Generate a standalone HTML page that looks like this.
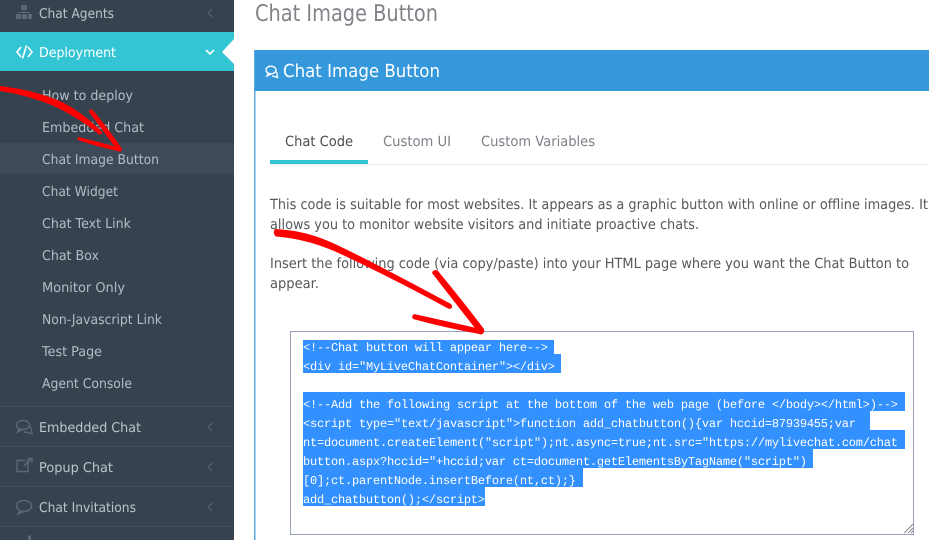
<!DOCTYPE html>
<html><head><meta charset="utf-8"><style>
html,body{margin:0;padding:0;background:#fff;width:929px;height:540px;overflow:hidden}
svg{display:block}
text{font-family:"DejaVu Sans",sans-serif;white-space:pre}
.s{font-size:13.5px;fill:#b4bcc7}
.m{font-size:13.5px;fill:#bcc3cd}
.b{font-size:14px;fill:#55585c}
.c{font-family:"Liberation Mono",monospace;font-size:12px;fill:#fff}
</style></head><body>
<svg width="929" height="540" viewBox="0 0 929 540" xmlns="http://www.w3.org/2000/svg" text-rendering="geometricPrecision">
<rect width="929" height="540" fill="#fff"/>
<!-- sidebar -->
<rect width="234" height="540" fill="#37424f"/>
<rect y="32" width="234" height="39" fill="#33c5d4"/>
<path d="M234 39L222 52L234 64Z" fill="#fff"/>
<rect y="143" width="234" height="31" fill="#3e4a59"/>
<g fill="#414d5b"><rect y="406" width="234" height="1"/><rect y="446" width="234" height="1"/><rect y="486" width="234" height="1"/><rect y="526" width="234" height="1"/></g>
<!-- sidebar icons -->
<g fill="#5d6875"><rect x="21" y="5" width="6" height="5"/><rect x="23.5" y="10" width="1" height="3"/><rect x="18" y="12" width="12" height="1"/><rect x="16" y="14" width="5" height="5"/><rect x="22" y="14" width="5" height="5"/><rect x="28" y="14" width="4" height="5"/></g>
<path d="M21 47L17 52L21 57M28 47L32 52L28 57M26.5 45.5L22.5 58.5" fill="none" stroke="#fff" stroke-width="1.6"/>
<g fill="none" stroke="#5d6875" stroke-width="1.4">
<ellipse cx="23" cy="425" rx="6.5" ry="4.5"/><path d="M19 429L17.5 432L22 430"/><path d="M29 426.5Q32 428 31.5 431L32 434L28 432.5L24 432"/>
<path d="M28 465V476.5H17V465.5H25" transform="translate(0,-5)"/><path d="M24 466L31 459" stroke-width="1.8"/><path d="M27 458.5H32V463" stroke-width="1.2"/>
<ellipse cx="24" cy="506" rx="7.5" ry="5.5"/><path d="M20 511L18 514L24 511.5"/>
</g>
<path d="M28 535.5h3v5h-3z" fill="#5d6875"/>
<!-- chevrons -->
<g fill="none" stroke="#56616e" stroke-width="1.2"><path d="M212 9L208 13L212 17"/><path d="M212 423L208 427L212 431"/><path d="M212 463L208 467L212 471"/><path d="M212 503L208 507L212 511"/></g>
<path d="M206 50L210 54L214 50" fill="none" stroke="#fff" stroke-width="1.6"/>
<!-- sidebar text -->
<text class="m" x="39" y="18" textLength="75" lengthAdjust="spacingAndGlyphs">Chat Agents</text>
<text class="m" x="39" y="57" textLength="77" lengthAdjust="spacingAndGlyphs" style="fill:#fff">Deployment</text>
<text class="s" x="42" y="100" textLength="91" lengthAdjust="spacingAndGlyphs">How to deploy</text>
<text class="s" x="42" y="132" textLength="102" lengthAdjust="spacingAndGlyphs">Embedded Chat</text>
<text class="s" x="42" y="164" textLength="117" lengthAdjust="spacingAndGlyphs">Chat Image Button</text>
<text class="s" x="42" y="196" textLength="76" lengthAdjust="spacingAndGlyphs">Chat Widget</text>
<text class="s" x="42" y="228" textLength="89" lengthAdjust="spacingAndGlyphs">Chat Text Link</text>
<text class="s" x="42" y="260" textLength="57" lengthAdjust="spacingAndGlyphs">Chat Box</text>
<text class="s" x="42" y="292" textLength="83" lengthAdjust="spacingAndGlyphs">Monitor Only</text>
<text class="s" x="42" y="324" textLength="120" lengthAdjust="spacingAndGlyphs">Non-Javascript Link</text>
<text class="s" x="42" y="356" textLength="60" lengthAdjust="spacingAndGlyphs">Test Page</text>
<text class="s" x="42" y="388" textLength="90" lengthAdjust="spacingAndGlyphs">Agent Console</text>
<text class="m" x="39" y="432" textLength="102" lengthAdjust="spacingAndGlyphs">Embedded Chat</text>
<text class="m" x="39" y="472" textLength="74" lengthAdjust="spacingAndGlyphs">Popup Chat</text>
<text class="m" x="39" y="512" textLength="97" lengthAdjust="spacingAndGlyphs">Chat Invitations</text>
<!-- page title -->
<text x="255" y="21" font-size="23" fill="#808489" textLength="183" lengthAdjust="spacingAndGlyphs">Chat Image Button</text>
<!-- panel -->
<rect x="254" y="50" width="1.5" height="490" fill="#5dade2"/>
<rect x="255" y="50" width="674" height="41" fill="#3498db"/>
<g fill="none" stroke="#fff" stroke-width="1.3"><ellipse cx="271" cy="70" rx="5" ry="3.8"/><path d="M268 73.5L267 76L271 74"/><path d="M275.5 71.5Q278 73 277 75.5L277.5 77.5L274.5 76.5L272 76"/></g>
<text x="283" y="77" font-size="18" fill="#fff" textLength="157" lengthAdjust="spacingAndGlyphs">Chat Image Button</text>
<!-- tabs -->
<rect x="270" y="164" width="659" height="1" fill="#e8edf3"/>
<rect x="270" y="160" width="98" height="4" fill="#33c5d4"/>
<text x="285" y="146" font-size="14" fill="#4a4d52" textLength="68" lengthAdjust="spacingAndGlyphs">Chat Code</text>
<text x="383" y="146" font-size="14" fill="#7b7f86" textLength="68" lengthAdjust="spacingAndGlyphs">Custom UI</text>
<text x="481" y="146" font-size="14" fill="#7b7f86" textLength="114" lengthAdjust="spacingAndGlyphs">Custom Variables</text>
<!-- body text -->
<text class="b" x="270" y="209" textLength="658" lengthAdjust="spacingAndGlyphs">This code is suitable for most websites. It appears as a graphic button with online or offline images. It</text>
<text class="b" x="270" y="229" textLength="429" lengthAdjust="spacingAndGlyphs">allows you to monitor website visitors and initiate proactive chats.</text>
<text class="b" x="270" y="268" textLength="639" lengthAdjust="spacingAndGlyphs">Insert the following code (via copy/paste) into your HTML page where you want the Chat Button to</text>
<text class="b" x="270" y="288" textLength="49" lengthAdjust="spacingAndGlyphs">appear.</text>
<!-- textarea -->
<rect x="290.5" y="331.5" width="623" height="203" fill="#fff" stroke="#9aa3bb"/>
<g fill="#3390ff">
<rect x="303" y="340" width="251" height="14"/>
<rect x="303" y="354" width="258" height="19"/>
<rect x="303" y="392" width="602" height="19"/>
<rect x="303" y="411" width="567" height="19"/>
<rect x="303" y="430" width="602" height="19"/>
<rect x="303" y="449" width="510" height="19"/>
<rect x="303" y="468" width="280" height="19"/>
<rect x="303" y="487" width="182" height="19"/>
</g>
<text class="c" x="303" y="351" textLength="245">&lt;!--Chat button will appear here--&gt;</text>
<text class="c" x="303" y="370" textLength="252">&lt;div id="MyLiveChatContainer"&gt;&lt;/div&gt;</text>
<text class="c" x="303" y="408" textLength="595">&lt;!--Add the following script at the bottom of the web page (before &lt;/body&gt;&lt;/html&gt;)--&gt;</text>
<text class="c" x="303" y="427" textLength="553">&lt;script type="text/javascript"&gt;function add_chatbutton(){var hccid=87939455;var</text>
<text class="c" x="303" y="446" textLength="595">nt=document.createElement("script");nt.async=true;nt.src="https://mylivechat.com/chat</text>
<text class="c" x="303" y="465" textLength="504">button.aspx?hccid="+hccid;var ct=document.getElementsByTagName("script")</text>
<text class="c" x="303" y="484" textLength="273">[0];ct.parentNode.insertBefore(nt,ct);}</text>
<text class="c" x="303" y="503" textLength="182">add_chatbutton();&lt;/script&gt;</text>
<path d="M904 533L913 524M908 533L913 528M911 533L913 531" stroke="#8a8a8a" stroke-width="1" fill="none"/>
<!-- red arrows -->
<g fill="#f00">
<path d="M0 86Q35 90 62 102Q85 114 102 132Q102 135 99 134.500Q82 120 58 108Q32 96 0 91Z"/>
<path d="M89 110.500Q91 108 93 110.500Q108 128 122 149Q122 152 118 151.500Q104 132 89 112Z"/>
<path d="M78 137Q100 142 121 148.500L120 151.500Q98 147 78 140Q77 138.500 78 137Z"/>
<path d="M275 229Q305 230 335 244Q375 263 451 304Q454 308 449 309Q400 282 345 256Q310 239 276 236.500Q272 233 275 229Z"/>
<path d="M433 271Q436 269 438 271Q462 300 484 329Q485 334 480 334.500Q456 304 432 273Z"/>
<path d="M414 314Q450 322 483 329.500L482 334.500Q446 328 413 319Q411 316 414 314Z"/>
</g>
</svg>
</body></html>
